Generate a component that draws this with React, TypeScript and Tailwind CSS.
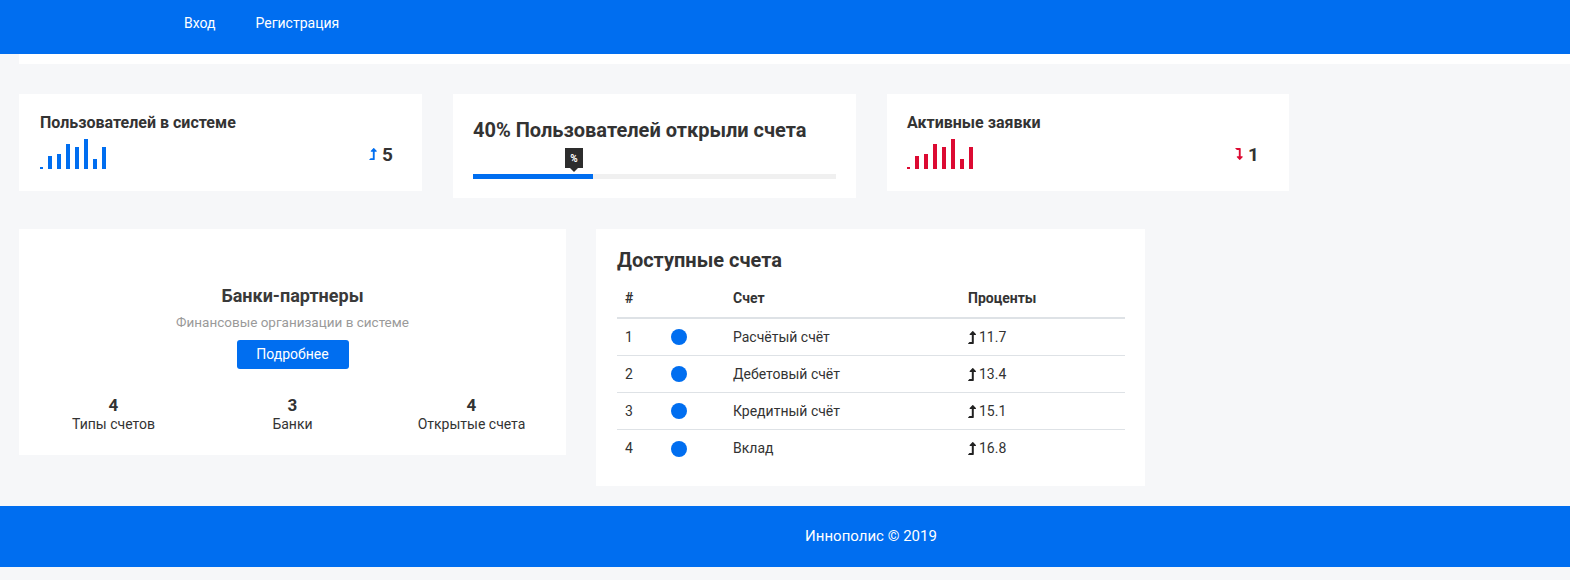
import { FaLevelUpAlt, FaLevelDownAlt } from "react-icons/fa";

const bars = [2, 13, 15, 25, 22, 30, 10, 22];

const Bars = ({ color }: { color: string }) => (
  <div className="flex h-[30px] items-end gap-[5px]">
    {bars.map((h, i) => (
      <div key={i} className={`${color} ${i === 0 ? "w-[3px]" : "w-[4px]"}`} style={{ height: h }} />
    ))}
  </div>
);

const rows = [
  { n: 1, name: "Расчётый счёт", pct: "11.7" },
  { n: 2, name: "Дебетовый счёт", pct: "13.4" },
  { n: 3, name: "Кредитный счёт", pct: "15.1" },
  { n: 4, name: "Вклад", pct: "16.8" },
];

export default function App() {
  return (
    <div className="min-h-[580px] bg-[#f6f7f9] font-['Roboto',sans-serif] text-[#333]">
      <header className="flex h-[54px] items-center gap-10 bg-[#006ef0] pb-[8px] pl-[184px] text-[14px] text-white">
        <a>Вход</a>
        <a>Регистрация</a>
      </header>
      <div className="ml-[19px] h-[10px] bg-white" />

      <div className="mt-[30px] flex items-start gap-[31px] px-[19px]">
        <div className="w-[403px] bg-white pb-[22px] pl-[21px] pr-[29px] pt-[19px]">
          <h3 className="text-[16px] font-bold leading-[19px]">Пользователей в системе</h3>
          <div className="mt-[7px] flex items-center justify-between">
            <Bars color="bg-[#006ef0]" />
            <div className="flex items-center gap-[5px]">
              <FaLevelUpAlt className="h-[12px] w-[8px] text-[#006ef0]" />
              <span className="text-[19px] font-bold leading-none">5</span>
            </div>
          </div>
        </div>

        <div className="w-[403px] bg-white px-5 pb-[19px] pt-[24px]">
          <h3 className="text-[20px] font-bold leading-[24px]">40% Пользователей открыли счета</h3>
          <div className="relative mt-[32px] h-[5px] bg-[#f0f0f0]">
            <div className="h-full w-[33%] bg-[#006ef0]" />
            <div className="absolute left-[92px] top-[-26px] flex h-[20px] w-[18px] items-center justify-center bg-[#2d2d2d] text-[10px] font-bold text-white">
              %
              <div className="absolute left-[5px] top-[20px] h-0 w-0 border-x-[4px] border-t-[4px] border-x-transparent border-t-[#2d2d2d]" />
            </div>
          </div>
        </div>

        <div className="w-[402px] bg-white pb-[22px] pl-5 pr-[30px] pt-[19px]">
          <h3 className="text-[16px] font-bold leading-[19px]">Активные заявки</h3>
          <div className="mt-[7px] flex items-center justify-between">
            <Bars color="bg-[#dc0a32]" />
            <div className="flex items-center gap-[5px]">
              <FaLevelDownAlt className="h-[12px] w-[8px] text-[#dc0a32]" />
              <span className="text-[19px] font-bold leading-none">1</span>
            </div>
          </div>
        </div>
      </div>

      <div className="mt-[31px] flex items-start gap-[30px] px-[19px]">
        <div className="flex w-[547px] flex-col items-center bg-white px-[5px] pb-[22px] pt-[57px]">
          <h3 className="text-[18px] font-bold leading-[20px] text-[#3a3a3a]">Банки-партнеры</h3>
          <p className="mt-[7px] text-[13.5px] leading-[18px] text-[#9a9a9a]">Финансовые организации в системе</p>
          <button className="mt-[9px] h-[29px] w-[112px] rounded-[3px] bg-[#006ef0] text-[14px] text-white">Подробнее</button>
          <div className="mt-[26px] grid w-full grid-cols-3 text-center">
            {[
              ["4", "Типы счетов"],
              ["3", "Банки"],
              ["4", "Открытые счета"],
            ].map(([v, l]) => (
              <div key={l}>
                <div className="text-[17px] font-bold leading-[20px]">{v}</div>
                <div className="text-[14px] leading-[18px]">{l}</div>
              </div>
            ))}
          </div>
        </div>

        <div className="w-[549px] bg-white pb-[19px] pl-[21px] pr-5 pt-[19px]">
          <h2 className="text-[20px] font-bold leading-[24px]">Доступные счета</h2>
          <div className="mt-2 text-[14px]">
            <div className="grid grid-cols-[46px_62px_235px_1fr] border-b-2 border-[#dee2e6] py-[9px] text-[14px] font-bold leading-[19px]">
              <div className="pl-2">#</div>
              <div />
              <div className="pl-2">Счет</div>
              <div className="pl-2">Проценты</div>
            </div>
            {rows.map((r, i) => (
              <div
                key={r.n}
                className={`grid h-[37px] grid-cols-[46px_62px_235px_1fr] items-center ${i < rows.length - 1 ? "border-b border-[#dee2e6]" : ""}`}
              >
                <div className="pl-2">{r.n}</div>
                <div className="pl-2">
                  <div className="h-[16px] w-[16px] rounded-full bg-[#006ef0]" />
                </div>
                <div className="pl-2">{r.name}</div>
                <div className="flex items-center gap-[3px] pl-2">
                  <FaLevelUpAlt className="h-[13px] w-[8px] text-[#222]" />
                  <span>{r.pct}</span>
                </div>
              </div>
            ))}
          </div>
        </div>
      </div>

      <footer className="mt-5 flex h-[61px] items-center justify-center bg-[#006ef0] pl-[172px] text-[15px] text-white">
        Иннополис © 2019
      </footer>
    </div>
  );
}
